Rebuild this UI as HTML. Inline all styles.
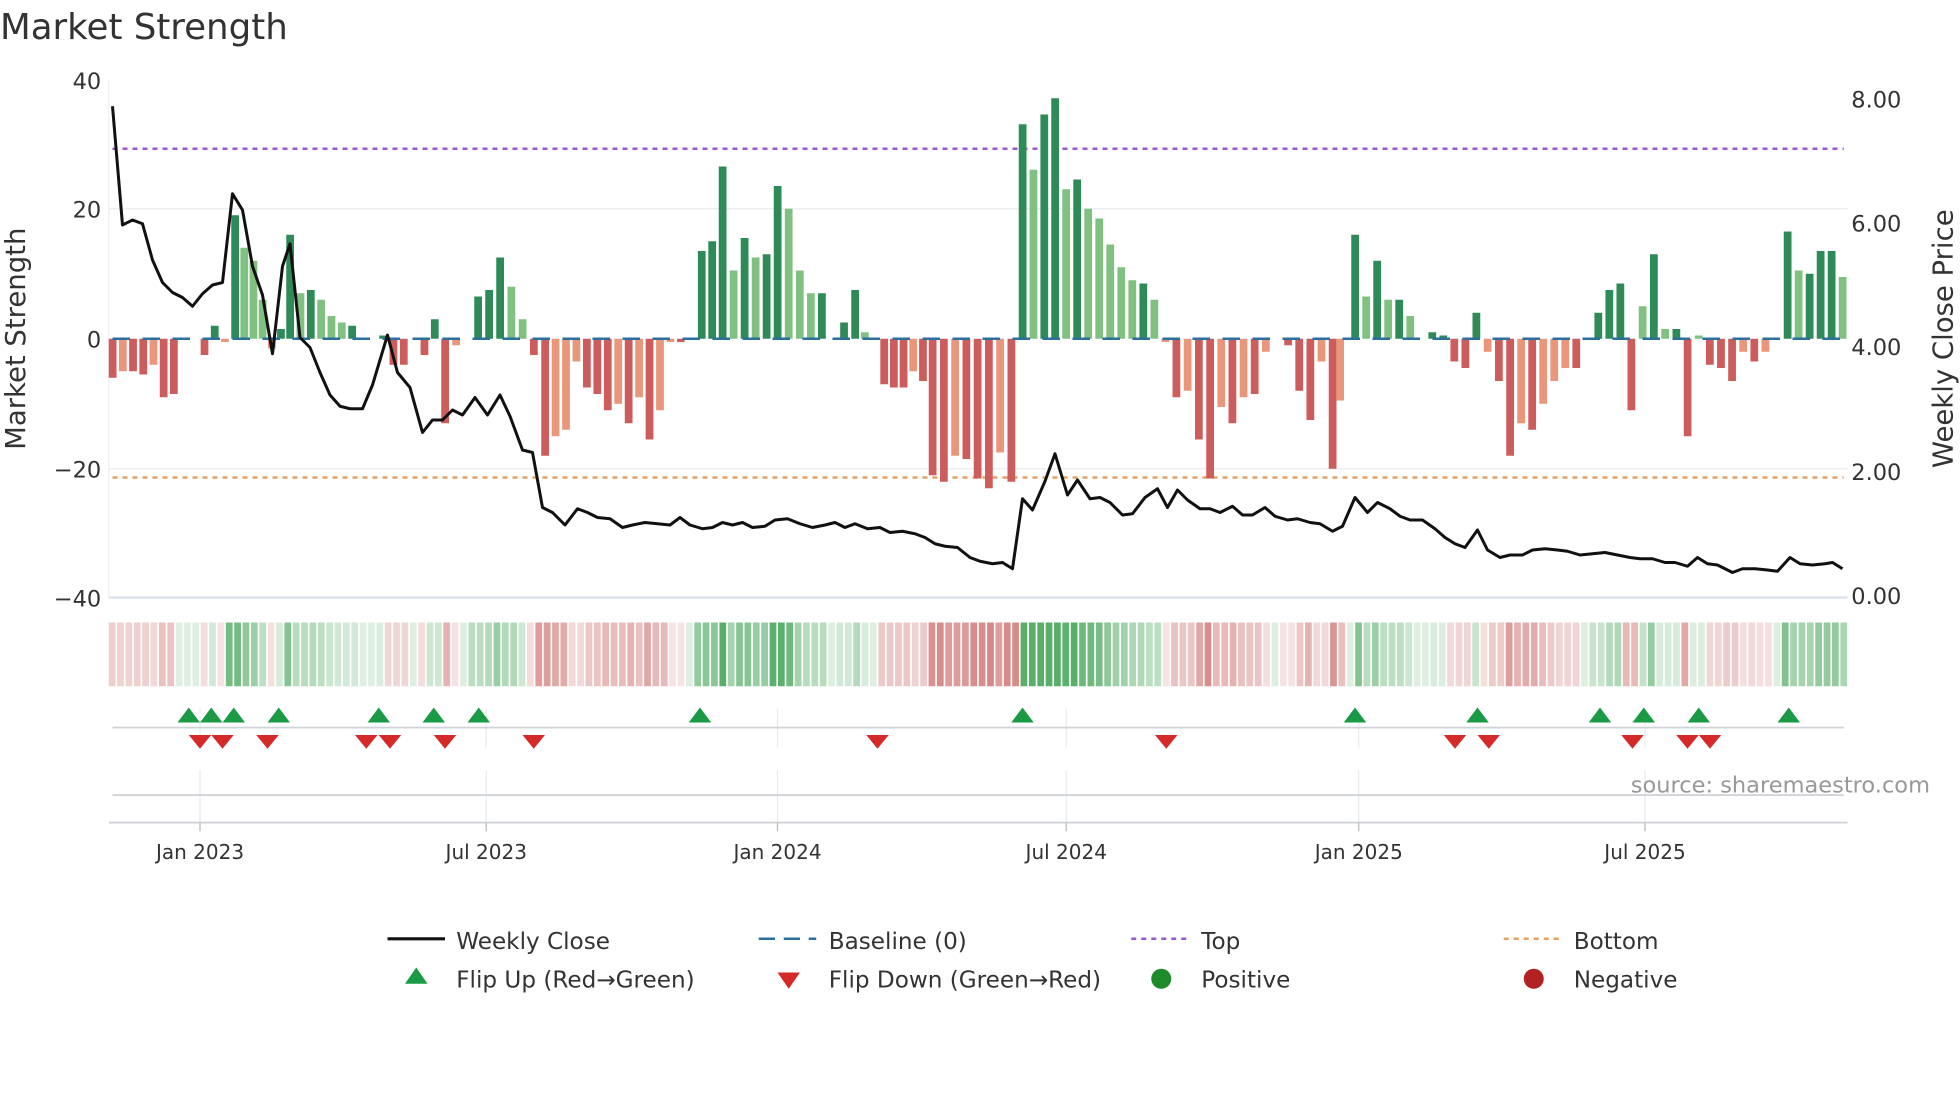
<!DOCTYPE html>
<html><head><meta charset="utf-8">
<style>
html,body{margin:0;padding:0;background:#fff;width:1960px;height:1102px;overflow:hidden}
svg{display:block}
text{font-family:"DejaVu Sans","Liberation Sans",sans-serif;fill:#333}
</style></head>
<body>
<svg id="s" width="1960" height="1102" viewBox="0 0 1568 881.6" xmlns="http://www.w3.org/2000/svg">
<text x="0" y="31" font-size="28.5" fill="#333">Market Strength</text>
<g id="grid"></g>
<g id="bars"></g>
<g id="strip"></g>
<g id="marks"></g>
<g id="legend"></g>
</svg>
<script>
var NS="http://www.w3.org/2000/svg";
function el(p,t,a,txt){var e=document.createElementNS(NS,t);for(var k in a)e.setAttribute(k,a[k]);if(txt!==undefined)e.textContent=txt;document.getElementById(p).appendChild(e);return e;}
var y0=271,k=5.2;
[167,375].forEach(function(y){el("grid","line",{x1:87,x2:1478,y1:y,y2:y,stroke:"#eceff2","stroke-width":1.2});});
el("grid","line",{x1:87,x2:1478,y1:478,y2:478,stroke:"#dde4ee","stroke-width":2});
el("grid","line",{x1:87,x2:87,y1:64,y2:478,stroke:"#eef0f2","stroke-width":1});
[[40,64],[20,167],[0,271],["\u221220",375],["\u221240",478]].forEach(function(a){el("grid","text",{x:81,y:a[1]+7,"font-size":18,"text-anchor":"end"},a[0]);});
[["8.00",79],["6.00",178],["4.00",277],["2.00",377],["0.00",476]].forEach(function(a){el("grid","text",{x:1481,y:a[1]+7,"font-size":18},a[0]);});
el("grid","text",{x:0,y:0,"font-size":22,"text-anchor":"middle",transform:"translate(20,271) rotate(-90)"},"Market Strength");
el("grid","text",{x:0,y:0,"font-size":22,"text-anchor":"middle",transform:"translate(1562,271) rotate(-90)"},"Weekly Close Price");
el("grid","line",{x1:90,x2:1475,y1:119,y2:119,stroke:"#9b59d0","stroke-width":2,"stroke-dasharray":"4,4"});
el("grid","line",{x1:90,x2:1475,y1:382,y2:382,stroke:"#e8a060","stroke-width":2,"stroke-dasharray":"4,4"});
var v=[-6,-5,-5,-5.5,-4,-9,-8.5,0,0,-2.5,2,-0.5,19,14,12,6,-1.5,1.5,16,7,7.5,6,3.5,2.5,2,0,0,0.5,-4,-4,0,-2.5,3,-13,-1,0,6.5,7.5,12.5,8,3,-2.5,-18,-15,-14,-3.5,-7.5,-8.5,-11,-10,-13,-9,-15.5,-11,-0.5,-0.5,0,13.5,15,26.5,10.5,15.5,12.5,13,23.5,20,10.5,7,7,0,2.5,7.5,1,0,-7,-7.5,-7.5,-5,-6.5,-21,-22,-18,-18.5,-21.5,-23,-17.5,-22,33,26,34.5,37,23,24.5,20,18.5,14.5,11,9,8.5,6,-0.5,-9,-8,-15.5,-21.5,-10.5,-13,-9,-8.5,-2,0,-1,-8,-12.5,-3.5,-20,-9.5,0,16,6.5,12,6,6,3.5,0,1,0.5,-3.5,-4.5,4,-2,-6.5,-18,-13,-14,-10,-6.5,-4.5,-4.5,0,4,7.5,8.5,-11,5,13,1.5,1.5,-15,0.5,-4,-4.5,-6.5,-2,-3.5,-2,0,16.5,10.5,10,13.5,13.5,9.5];
var n=v.length;
var anc=[[0,90],[12,188],[18,232],[33,356],[38,400],[42,436],[59,578],[64,622],[71,684],[79,746],[87,818],[90,844],[101,941],[104,968],[115,1066],[118,1084],[129,1181],[132,1208],[143,1305],[145,1323],[148,1350],[157,1430],[162,1474]];
function bx(i){for(var a=0;a<anc.length-1;a++){if(i<=anc[a+1][0]){var p=anc[a],q=anc[a+1];return p[1]+(i-p[0])*(q[1]-p[1])/(q[0]-p[0]);}}return 1474;}
for(var i=0;i<n;i++){var x=bx(i)-3,val=v[i],prev=i?v[i-1]:0;
 var strong=Math.abs(val)>=Math.abs(prev)-0.5;
 var c=val>=0?(strong?"#2e8b57":"#80c080"):(strong?"#cd5c5c":"#e9967a");
 var h=Math.abs(val)*k; if(h<0.5)continue;
 el("bars","rect",{x:x,y:val>=0?y0-h:y0,width:6.2,height:h,fill:c});}
el("bars","line",{x1:90,x2:1475,y1:271,y2:271,stroke:"#2a6fa0","stroke-width":2,"stroke-dasharray":"14,10"});
var pts="90,85 98,180 106,176 114,179 122,208 130,226 138,234 146,238 154,245 162,235 170,228 178,226 186,155 194,168 202,213 210,236 218,283 226,213 232,195 240,270 248,278 256,298 264,316 272,325 280,327 290,327 298,308 310,268 318,298 328,310 338,346 346,336 354,336 362,328 370,332 380,318 390,332 400,316 408,333 418,360 426,362 434,406 442,410 452,420 462,407 470,410 478,414 488,415 498,422 506,420 516,418 526,419 536,420 544,414 552,420 562,423 570,422 578,418 586,420 594,418 602,422 612,421 620,416 630,415 640,419 650,422 660,420 668,418 676,422 684,419 694,423 704,422 712,426 722,425 732,427 740,430 748,435 756,437 766,438 776,446 784,449 794,451 802,450 810,455 818,399 826,408 836,385 844,363 854,396 862,384 872,399 880,398 888,402 898,412 906,411 916,398 926,391 934,406 942,392 950,400 960,407 968,407 976,410 986,405 994,412 1002,412 1012,406 1020,413 1030,416 1038,415 1048,418 1056,419 1066,425 1074,421 1084,398 1094,410 1102,402 1112,407 1120,413 1128,416 1138,416 1148,423 1156,430 1164,435 1172,438 1182,424 1190,440 1200,446 1208,444 1218,444 1226,440 1236,439 1246,440 1254,441 1264,444 1274,443 1284,442 1294,444 1304,446 1312,447 1322,447 1332,450 1340,450 1350,453 1358,446 1366,451 1374,452 1386,458 1394,455 1404,455 1414,456 1422,457 1432,446 1440,451 1450,452 1460,451 1466,450 1474,455";
el("bars","polyline",{points:pts,fill:"none",stroke:"#111","stroke-width":2.4,"stroke-linejoin":"round"});
var cells=208,cw=(1479-87)/cells;
function nearest(cx){var best=0,bd=1e9;for(var i=0;i<n;i++){var d=Math.abs(bx(i)-cx);if(d<bd){bd=d;best=i;}}return best;}
for(var j=0;j<cells;j++){var cx=87+(j+0.5)*cw;var val=v[nearest(cx)];
 var a=Math.min(1,0.2+Math.abs(val)/30);
 var col=val>=0?"rgba(60,160,80,"+(a*0.85)+")":"rgba(200,90,90,"+(a*0.75)+")";
 el("strip","rect",{x:87+j*cw,y:498,width:cw-1.3,height:51,fill:col});}
[160,389,622,853,1087,1316].forEach(function(x){el("marks","line",{x1:x,x2:x,y1:567,y2:598,stroke:"#e8ebee","stroke-width":1});el("marks","line",{x1:x,x2:x,y1:616,y2:665,stroke:"#e8ebee","stroke-width":1});});
el("marks","line",{x1:90,x2:1475,y1:582,y2:582,stroke:"#d0d4d8","stroke-width":1.5});
el("marks","line",{x1:90,x2:1475,y1:636,y2:636,stroke:"#d0d4d8","stroke-width":1.5});
el("marks","line",{x1:87,x2:1478,y1:658,y2:658,stroke:"#cfd3d7","stroke-width":1.5});
[["Jan 2023",160],["Jul 2023",389],["Jan 2024",622],["Jul 2024",853],["Jan 2025",1087],["Jul 2025",1316]].forEach(function(a){el("marks","line",{x1:a[1],x2:a[1],y1:658,y2:665,stroke:"#bbb"});el("marks","text",{x:a[1],y:687,"font-size":16,"text-anchor":"middle"},a[0]);});
[151,169,187,223,303,347,383,560,818,1084,1182,1280,1315,1359,1431].forEach(function(x){el("marks","path",{d:"M"+(x-9)+",578 L"+(x+9)+",578 L"+x+",566 Z",fill:"#1a9a45"});});
[160,178,214,293,312,356,427,702,933,1164,1191,1306,1350,1368].forEach(function(x){el("marks","path",{d:"M"+(x-9)+",588 L"+(x+9)+",588 L"+x+",599 Z",fill:"#d42a2a"});});
el("marks","text",{x:1544,y:634,"font-size":18,"text-anchor":"end",style:"fill:#999"},"source: sharemaestro.com");
var fs=18.5;
el("legend","line",{x1:310,x2:356,y1:751,y2:751,stroke:"#111","stroke-width":2.5});
el("legend","text",{x:365,y:759,"font-size":fs},"Weekly Close");
el("legend","line",{x1:607,x2:653,y1:751,y2:751,stroke:"#2a6fa0","stroke-width":2,"stroke-dasharray":"13,7"});
el("legend","text",{x:663,y:759,"font-size":fs},"Baseline (0)");
el("legend","line",{x1:905,x2:951,y1:751,y2:751,stroke:"#9b59d0","stroke-width":2,"stroke-dasharray":"4,4"});
el("legend","text",{x:961,y:759,"font-size":fs},"Top");
el("legend","line",{x1:1203,x2:1249,y1:751,y2:751,stroke:"#e8a060","stroke-width":2,"stroke-dasharray":"4,4"});
el("legend","text",{x:1259,y:759,"font-size":fs},"Bottom");
el("legend","path",{d:"M324,787 L342,787 L333,774 Z",fill:"#1a9a45"});
el("legend","text",{x:365,y:790,"font-size":fs},"Flip Up (Red\u2192Green)");
el("legend","path",{d:"M622,778 L640,778 L631,791 Z",fill:"#d42a2a"});
el("legend","text",{x:663,y:790,"font-size":fs},"Flip Down (Green\u2192Red)");
el("legend","circle",{cx:929,cy:783,r:8,fill:"#1f8a2a"});
el("legend","text",{x:961,y:790,"font-size":fs},"Positive");
el("legend","circle",{cx:1227,cy:783,r:8,fill:"#b22222"});
el("legend","text",{x:1259,y:790,"font-size":fs},"Negative");
</script>
</body></html>
